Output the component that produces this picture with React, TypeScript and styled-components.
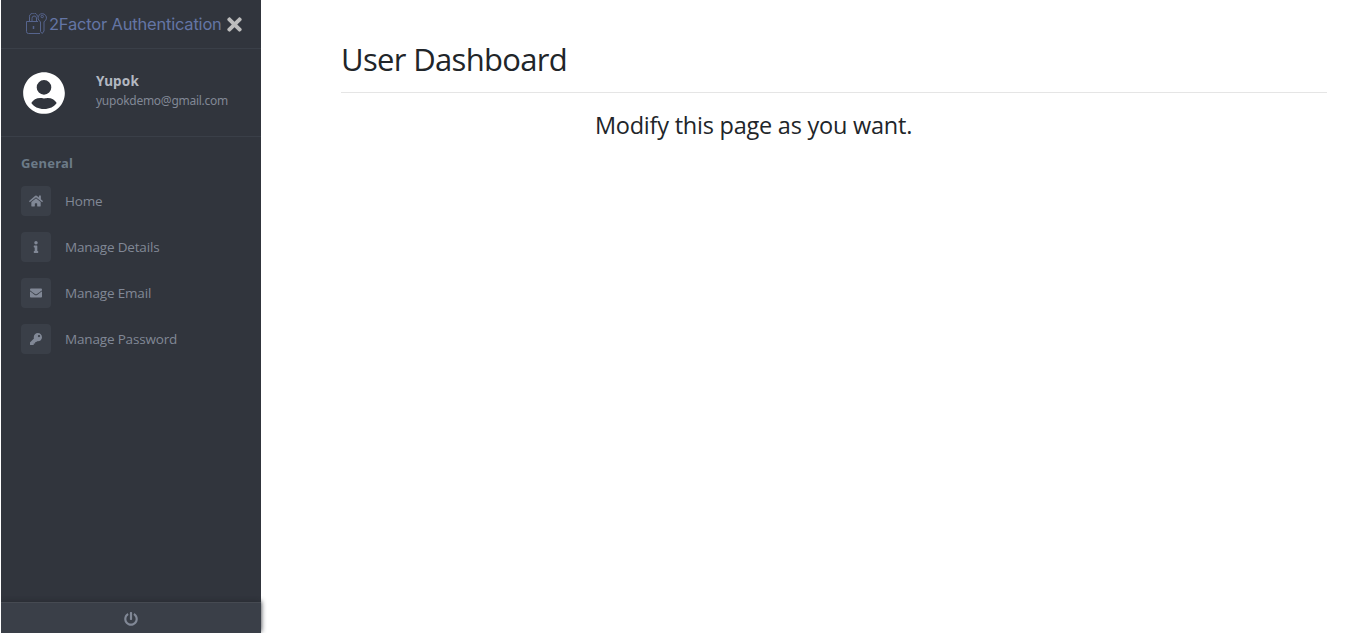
import React from "react";
import styled, { createGlobalStyle } from "styled-components";
import { FaHome, FaInfo, FaEnvelope, FaKey, FaPowerOff, FaTimes } from "react-icons/fa";

const GlobalStyle = createGlobalStyle`
  * { box-sizing: border-box; }
  body {
    margin: 0;
    background: #fff;
    color: #212529;
    font-family: "Noto Sans", "Open Sans", sans-serif;
    overflow: hidden;
  }
  svg { display: block; }
`;

const Page = styled.div`
  display: flex;
  height: 633px;
  padding-left: 1px;
`;

const Sidebar = styled.nav`
  display: flex;
  flex-direction: column;
  width: 260px;
  flex: none;
  background: #31353d;
`;

const Brand = styled.div`
  display: flex;
  align-items: center;
  height: 49px;
  padding: 0 16px 0 25px;
  border-bottom: 1px solid #3a3f48;
`;

const BrandName = styled.span`
  flex: 1;
  margin-left: 2px;
  white-space: nowrap;
  font: 400 16.5px/24px Inter, sans-serif;
  letter-spacing: -0.2px;
  color: #6475a5;
`;

const CloseButton = styled.button`
  display: flex;
  padding: 0;
  border: 0;
  background: none;
  color: #bdbdbd;
`;

const Profile = styled.div`
  display: flex;
  height: 88px;
  padding: 19px 18px;
  border-bottom: 1px solid #3a3f48;
`;

const ProfileText = styled.div`
  display: flex;
  flex-direction: column;
  margin: 4px 0 0 27px;
`;

const ProfileName = styled.strong`
  font-size: 13.5px;
  line-height: 19px;
  letter-spacing: 0.15px;
  color: #b3b8c1;
`;

const ProfileMail = styled.span`
  font-size: 12px;
  line-height: 20px;
  letter-spacing: -0.26px;
  color: #818896;
`;

const Menu = styled.div`
  flex: 1;
  padding: 15px 20px;
`;

const MenuTitle = styled.div`
  margin-bottom: 12px;
  font-size: 13px;
  font-weight: 700;
  line-height: 22px;
  letter-spacing: 0.2px;
  color: #6c7b88;
`;

const MenuItem = styled.a`
  display: flex;
  align-items: center;
  height: 30px;
  margin-bottom: 16px;
  font-family: "Open Sans", "Noto Sans", sans-serif;
  font-size: 13.5px;
  font-weight: 380;
  letter-spacing: -0.17px;
  white-space: nowrap;
  color: #818896;
`;

const IconTile = styled.span`
  display: flex;
  align-items: center;
  justify-content: center;
  width: 30px;
  height: 30px;
  margin-right: 14px;
  border-radius: 4px;
  background: #3a3f48;
`;

const Footer = styled.div`
  display: flex;
  align-items: center;
  justify-content: center;
  height: 31px;
  padding-top: 2px;
  border-top: 1px solid #464a52;
  background: #3a3f48;
  box-shadow: 0 -1px 5px #282c33;
  clip-path: inset(-6px -6px 0 0);
  color: #818896;
`;

const Content = styled.main`
  flex: 1;
  padding: 40px 33px 0 80px;
  font-family: "Open Sans", "Noto Sans", sans-serif;
`;

const Heading = styled.h2`
  margin: 0;
  padding-bottom: 14px;
  border-bottom: 1px solid #e5e5e5;
  font-size: 31px;
  font-weight: 370;
  line-height: 38px;
  letter-spacing: -0.67px;
`;

const Message = styled.h4`
  margin: 18px 0 0;
  padding-right: 161px;
  text-align: center;
  font-size: 23.5px;
  font-weight: 380;
  line-height: 29px;
  letter-spacing: -0.23px;
`;

const LockLogo = () => (
  <svg width="21" height="22" viewBox="0 0 21 22" fill="none" stroke="#56648d" strokeWidth="1">
    <path d="M14 20.500H2.500a2 2 0 0 1-2-2V8.500H12M3.500 8.500V5a4 4 0 0 1 8-1.500M6 8.500V5.500a2.200 2.200 0 0 1 4.500-.5v3.500" />
    <path d="M14.500 8.700a4.200 4.200 0 1 1 3.500 0v9.300l-1.800 2.500-1.700-1.800z" />
    <circle cx="16.200" cy="3.500" r="1.200" />
    <path d="M7.500 13v3" strokeWidth="1.500" />
  </svg>
);

const Avatar = () => (
  <svg width="50" height="50" viewBox="0 0 24 24" fill="#fff">
    <path d="M12 2C6.480 2 2 6.480 2 12s4.480 10 10 10 10-4.480 10-10S17.520 2 12 2zm0 3.800a3.500 3.500 0 1 1 0 7 3.500 3.500 0 0 1 0-7zm0 13.900c-2.700 0-4.900-1.100-6.100-2.900.8-1.500 2.500-2.400 4.300-2.400.4 0 .9.200 1.800.2s1.400-.2 1.800-.2c1.800 0 3.500.9 4.300 2.400-1.200 1.800-3.400 2.900-6.100 2.900z" />
  </svg>
);

const items = [
  { label: "Home", icon: <FaHome size={14} /> },
  { label: "Manage Details", icon: <FaInfo size={12} /> },
  { label: "Manage Email", icon: <FaEnvelope size={12} /> },
  { label: "Manage Password", icon: <FaKey size={12} /> },
];

export default function App() {
  return (
    <Page>
      <GlobalStyle />
      <Sidebar>
        <Brand>
          <LockLogo />
          <BrandName>2Factor Authentication</BrandName>
          <CloseButton aria-label="Close"><FaTimes size={21} /></CloseButton>
        </Brand>
        <Profile>
          <Avatar />
          <ProfileText>
            <ProfileName>Yupok</ProfileName>
            <ProfileMail>yupokdemo@gmail.com</ProfileMail>
          </ProfileText>
        </Profile>
        <Menu>
          <MenuTitle>General</MenuTitle>
          {items.map((item) => (
            <MenuItem key={item.label}>
              <IconTile>{item.icon}</IconTile>
              {item.label}
            </MenuItem>
          ))}
        </Menu>
        <Footer><FaPowerOff size={14} /></Footer>
      </Sidebar>
      <Content>
        <Heading>User Dashboard</Heading>
        <Message>Modify this page as you want.</Message>
      </Content>
    </Page>
  );
}
